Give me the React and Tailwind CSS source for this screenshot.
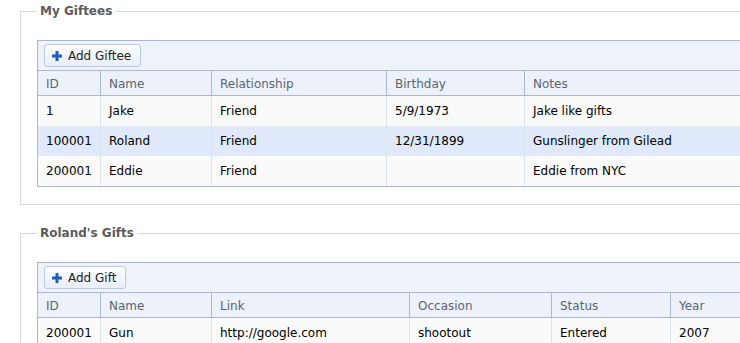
const font = { fontFamily: '"DejaVu Sans", Verdana, sans-serif' };

const giftees = {
  title: "My Giftees",
  button: "Add Giftee",
  cols: [
    { label: "ID", w: "w-[63px]" },
    { label: "Name", w: "w-[111px]" },
    { label: "Relationship", w: "w-[175px]" },
    { label: "Birthday", w: "w-[138px]" },
    { label: "Notes", w: "w-[260px]" },
  ],
  rows: [
    ["1", "Jake", "Friend", "5/9/1973", "Jake like gifts"],
    ["100001", "Roland", "Friend", "12/31/1899", "Gunslinger from Gilead"],
    ["200001", "Eddie", "Friend", "", "Eddie from NYC"],
  ],
  selected: 1,
};

const gifts = {
  title: "Roland's Gifts",
  button: "Add Gift",
  cols: [
    { label: "ID", w: "w-[63px]" },
    { label: "Name", w: "w-[111px]" },
    { label: "Link", w: "w-[198px]" },
    { label: "Occasion", w: "w-[142px]" },
    { label: "Status", w: "w-[119px]" },
    { label: "Year", w: "w-[120px]" },
  ],
  rows: [["200001", "Gun", "http://google.com", "shootout", "Entered", "2007"]],
  selected: -1,
};

function PlusIcon() {
  return (
    <svg width="10" height="10" viewBox="0 0 10 10" className="shrink-0">
      <path d="M3.5 0h3v3.5H10v3H6.5V10h-3V6.5H0v-3h3.5z" fill="#1c5fb8" />
    </svg>
  );
}

function Grid({ data }) {
  return (
    <div className="border border-[#a9b8cf] w-[760px]">
      {/* toolbar */}
      <div className="h-[29px] bg-[#eef3fa] px-[6px] pt-[3px]">
        <button className="h-[23px] flex items-center gap-[6px] pl-[7px] pr-[9px] border border-[#bccadd] rounded-[3px] bg-gradient-to-b from-[#fbfcfe] to-[#e9eff8] text-[12px] text-[#222]">
          <PlusIcon />
          {data.button}
        </button>
      </div>
      {/* header */}
      <div className="flex h-[26px] bg-[#edf2fa] border-t border-b border-[#a9b8cf]">
        {data.cols.map((c, i) => (
          <div
            key={c.label}
            className={`${c.w} shrink-0 flex items-center pl-[8px] pt-[1px] text-[12px] text-[#5a6473] ${
              i < data.cols.length - 1 ? "border-r border-[#a9b8cf]" : ""
            }`}
          >
            {c.label}
          </div>
        ))}
      </div>
      {/* rows */}
      {data.rows.map((r, ri) => (
        <div
          key={ri}
          className={`flex h-[30px] ${ri === data.selected ? "bg-[#dfe9f9]" : "bg-[#fafafa]"}`}
        >
          {r.map((v, ci) => (
            <div
              key={ci}
              className={`${data.cols[ci].w} shrink-0 flex items-center pl-[8px] text-[12px] text-black ${
                ci < r.length - 1 ? "border-r border-[#dde3ec]" : ""
              }`}
            >
              {v}
            </div>
          ))}
        </div>
      ))}
    </div>
  );
}

function Section({ data, className }) {
  return (
    <fieldset className={`border border-[#d9d9d9] ml-[20px] pl-[16px] pt-[21px] pb-[17px] w-[780px] ${className}`}>
      <legend className="px-[3px] text-[12px] leading-[16px] font-bold text-[#5b5b5b]">
        {data.title}
      </legend>
      <Grid data={data} />
    </fieldset>
  );
}

export default function App() {
  return (
    <div className="w-[740px] h-[343px] overflow-hidden bg-white pt-[3px]" style={font}>
      <Section data={giftees} />
      <Section data={gifts} className="mt-[20px]" />
    </div>
  );
}
